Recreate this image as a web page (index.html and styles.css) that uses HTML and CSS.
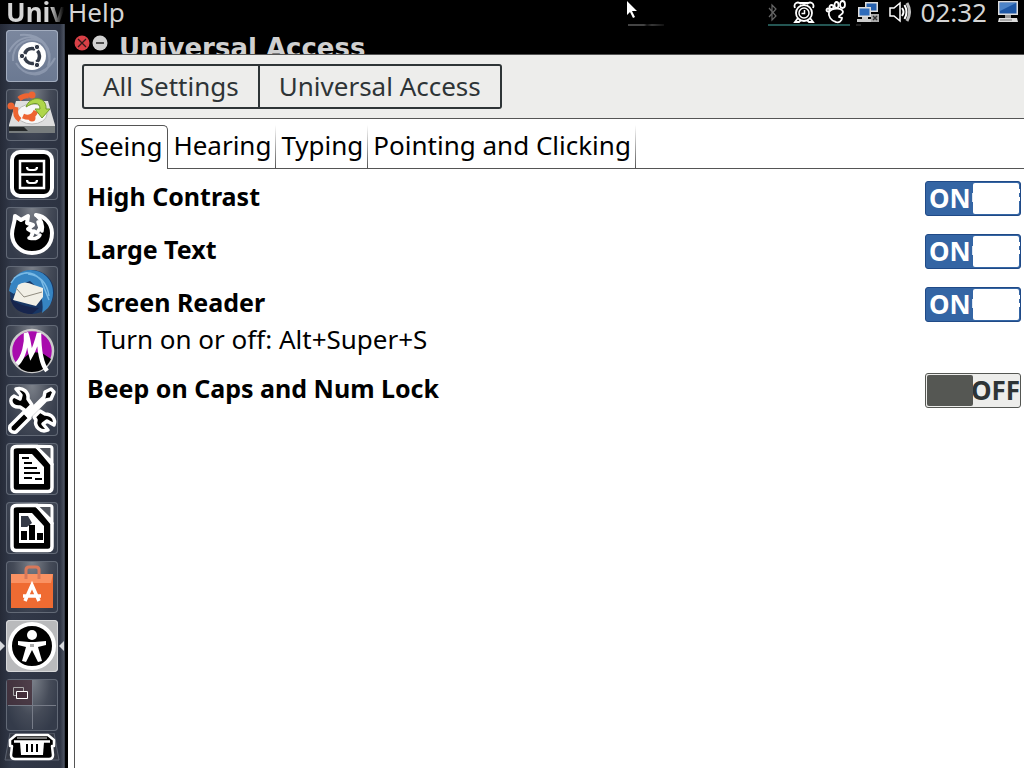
FILE: index.html
```html
<!DOCTYPE html>
<html lang="en">
<head>
<meta charset="utf-8">
<title>Universal Access</title>
<link rel="stylesheet" href="styles.css">
</head>
<body>
<header class="panel">
  <span class="app-name">Univ</span>
  <button class="menu-item">Help</button>
  <div class="remnants"><i class="bit bit-a"></i><i class="bit bit-b"></i><i class="bit bit-c"></i></div>
  <div class="indicators">
    <svg class="bluetooth" width="12" height="24" viewBox="0 0 12 24"><path d="M2 8l7 8-4 4V5l4 4-7 8" fill="none" stroke="#666" stroke-width="1.2"/></svg>
    <svg width="22" height="24" viewBox="0 0 22 24" fill="none" stroke="#fff" stroke-width="1.800"><path d="M2 8C0 3 5 1 8 4M20 8C22 3 17 1 14 4M5 18l-3 4h4l2-2M17 18l3 4h-4l-2-2M7 3h8"/><circle cx="11" cy="13" r="8"/><circle cx="11" cy="13" r="5" stroke-width="1.500"/><path d="M11.500 10v3.500H8.500" stroke-width="1.500"/></svg>
    <svg width="22" height="24" viewBox="0 0 22 24" fill="none" stroke="#fff" stroke-width="1.800"><path d="M4 12C7 8 17 7 18 12c0 3-5 3-4 5l3 1c0 3-3 5-6 4-5-1-8-6-7-10z"/><ellipse cx="17.500" cy="4.500" rx="2.500" ry="3.500"/><ellipse cx="11.500" cy="5" rx="2" ry="3"/><circle cx="6.500" cy="7" r="2"/><circle cx="3" cy="10" r="1.500"/></svg>
    <svg width="22" height="24" viewBox="0 0 22 24"><path d="M8 2h13v10H8z" fill="#ddd"/><path d="M9.500 3.500h10v7h-10z" fill="#2761ad"/><path d="M1 7h13v10H1z" fill="#ddd"/><path d="M2.500 8.500h10v7h-10z" fill="#2f6cbb"/><path d="M5 17h6v2H5zM0 19h15l1 3H0z" fill="#ccc"/><path d="M14 14h8v8h-8z" fill="#aaa"/><path d="M16 16l4 4m0-4l-4 4" stroke="#333" stroke-width="1.500"/></svg>
    <svg width="22" height="24" viewBox="0 0 22 24" fill="none" stroke="#fff" stroke-width="1.500"><path d="M1 8h4l6-5v18l-6-5H1z"/><path d="M13 8q3 4 0 8M15.500 5q4 7 0 14" stroke-width="2"/><path d="M18 3q5 9 0 18" stroke="#bbb" stroke-width="3"/></svg>
    <time class="clock">02:32</time>
    <svg class="session" width="22" height="24" viewBox="0 0 22 24"><path d="M1 1h20v14H1z" fill="#ddd"/><path d="M2.500 2.500h17v11h-17z" fill="#1e57a5"/><path d="M3 3h16L3 11z" fill="#4c83c7"/><path d="M8 15h6v3H8z" fill="#999"/><path d="M2 18h18l1 4H1z" fill="#ddd"/><path d="M3 20h12" stroke="#777"/></svg>
  </div>
</header>

<div class="desktop">
<nav class="launcher" aria-label="Launcher">
  <button class="tile dash" aria-label="Dash home"><svg viewBox="0 0 52 52"><g fill="none" stroke="#c0c9da" stroke-opacity=".35" stroke-width="2"><path d="M3 22C12 3 36 2 42 22s-9 26-23 20M14 5c22-2 34 14 28 31M7 31C6 12 23 6 36 12M49 28C39 47 19 48 10 33"/></g><circle cx="26" cy="26" r="14" fill="#fff"/><circle cx="26" cy="26" r="7.500" fill="none" stroke="#343b49" stroke-width="3.500" stroke-dasharray="13 2.700" stroke-dashoffset="6"/><g fill="#343b49" stroke="#fff"><circle cx="16" cy="26" r="2.700"/><circle cx="31" cy="17" r="2.700"/><circle cx="31" cy="35" r="2.700"/></g></svg></button>
  <button class="tile" aria-label="Install"><svg viewBox="0 0 52 52"><path d="M10 12h32l7 24v8H3v-8z" fill="#dedede"/><path d="M3 37h46v7H3z" fill="#777c7d"/><path d="M3 38h15l4 4H3z" fill="#252829"/><ellipse cx="26" cy="25" rx="15" ry="10" fill="#f7f7f7" stroke="#bbb"/><g fill="none" stroke="#ed6432" stroke-width="5"><path d="M13 10q5-4 10-3M10 18q-2 9 4 13M17 27q9 4 13-5"/></g><g fill="#ed6432"><circle cx="26" cy="6" r="3.500"/><circle cx="5" cy="17" r="3.500"/><circle cx="26" cy="29" r="3.500"/></g><path d="M20 18C24 6 41 7 40 20h4l-8 9-7-9h5c0-7-6-7-14-2z" fill="#afd64b" stroke="#709929"/></svg></button>
  <button class="tile" aria-label="Files"><svg viewBox="0 0 52 52"><rect x="6" y="4" width="40" height="44" rx="8" fill="#000" stroke="#fff" stroke-width="4"/><path d="M14 13h24v27H14zM14 26.500h24" fill="none" stroke="#fff" stroke-width="2.500"/><path d="M21 19q0 3 3 3h4q3 0 3-3M21 32q0 3 3 3h4q3 0 3-3" fill="none" stroke="#fff" stroke-width="2.200"/></svg></button>
  <button class="tile" aria-label="Firefox"><svg viewBox="0 0 52 52" stroke-linejoin="round" stroke-linecap="round"><path d="M9 9l6 4 7-4-1 6 5 3-4 4 5 2-1 5h7l2-5 2-9-4-6h5c6 4 8 10 8 17 0 13-9 20-20 20S6 38 6 27c0-7 3-11 3-18z" fill="#000"/><path d="M30 8C39 9 46 17 46 26c0 13-9 20-20 20S6 38 6 27c0-7 3-11 3-18l6 4 7-4-1 7 6 2-5 4 5 3-2 5" fill="none" stroke="#fff" stroke-width="4"/><path d="M23 31q8 2 11-3M28 24l3 2 3-5-2-6 4 5M30 8q8 7 6 16" fill="none" stroke="#fff" stroke-width="3.500"/></svg></button>
  <button class="tile" aria-label="Thunderbird"><svg viewBox="0 0 52 52"><circle cx="26" cy="26" r="22" fill="#183765"/><path d="M3 25C6 3 28-1 40 10c9 8 9 23 2 32l-6 5c2-9-1-17-3-24l-9-8-8 3-8 10z" fill="#3684c2"/><path d="M12 19q6-5 16 0l9 3v9l-7 9L7 34z" fill="#f1efe6"/><path d="M10 22l8 9 18-5" fill="none" stroke="#908c80"/><path d="M5 17C12 4 26 4 35 14l8 20M22 8q18 2 21 22M8 12q13-9 22-2" fill="none" stroke="#79b9e5" stroke-width="1.500"/><path d="M4 32q10 9 29 10l-7 6C14 48 7 43 4 32z" fill="#17254d"/></svg></button>
  <button class="tile" aria-label="MATE"><svg viewBox="0 0 52 52"><circle cx="26" cy="26" r="21" fill="#a80bad" stroke="#ccc" stroke-width="2.500"/><path d="M12 41q6-10 14-14l10 1 9 6q-6 13-19 13-9 0-14-6z" fill="#000"/><path d="M11 39C18 32 21 18 20 8c3 7 3 15 5 22 4-7 6-14 8-22 0 17 2 30 8 38" fill="none" stroke="#fff" stroke-width="4.500"/></svg></button>
  <button class="tile" aria-label="System Settings"><svg viewBox="0 0 52 52" stroke-linejoin="round"><g fill="#000" stroke="#fff" stroke-width="3.500"><path d="M10 5l5 6-1 4-6-3C2 15 5 24 14 23l6 4 6-6-4-6C23 8 17 3 10 5z"/><path d="M28 33l6-6 5 3c7 0 11 5 9 11l-7-4-4 3 5 6c-7 3-14-3-12-10z"/><path d="M4 42l14-14 6 6-14 14c-5 1-7-2-6-6z"/><path d="M21 30l17-17 1-5 6-3 3 3-3 7-5 1-17 17z"/></g></svg></button>
  <button class="tile" aria-label="Writer"><svg viewBox="0 0 52 52"><path d="M11 3.500h20l15 18v23q0 4-4 4H10q-4 0-4-4v-37q0-4 5-4z" fill="#000" stroke="#fff" stroke-width="3.500"/><path d="M30 3.500h14q2 0 2 2V19z" fill="#50545c" stroke="#fff" stroke-width="3"/><path d="M13 11h13l12 13v17H13z" fill="#fff"/><path d="M16 15h7M18 20h8M18 25h13M18 30h16M18 35h8M29 36h7" stroke="#000" stroke-width="2"/></svg></button>
  <button class="tile" aria-label="Calc"><svg viewBox="0 0 52 52"><path d="M11 3.500h20l15 18v23q0 4-4 4H10q-4 0-4-4v-37q0-4 5-4z" fill="#000" stroke="#fff" stroke-width="3.500"/><path d="M30 3.500h14q2 0 2 2V19z" fill="#50545c" stroke="#fff" stroke-width="3"/><path d="M13 11h13l12 13v17H13z" fill="#fff"/><path d="M15 14h7l4 7-5 4h-6z" fill="#353a47"/><path d="M15 29h6v9h-6zM23 23h6v15h-6zM31 31h6v7h-6z"/></svg></button>
  <button class="tile" aria-label="Software"><svg viewBox="0 0 52 52"><path d="M5 13h42v34H5z" fill="#ef6b32"/><path d="M5 13h42l-2 9H5z" fill="#fa9263"/><path d="M20 18V9q0-3 3-3h7q3 0 3 3v9" fill="none" stroke="#d8785a" stroke-width="3"/><path d="M19 40l7-16 7 16M17 35h18" fill="none" stroke="#fff" stroke-width="3.500"/></svg></button>
  <button class="tile active" aria-label="Universal Access"><svg viewBox="0 0 52 52"><circle cx="26" cy="26" r="22" fill="#000" stroke="#fff" stroke-width="4"/><circle cx="26" cy="15" r="5" fill="#fff"/><path d="M12 21l11 1h6l11-1v4l-8 2 4 14-4 1-6-12-6 12-4-1 4-14-8-2z" fill="#fff"/><path d="M24 24h4v3h-4z" fill="#aaa"/></svg></button>
  <button class="tile" aria-label="Workspaces"><svg viewBox="0 0 52 52"><path d="M1 1h25v25H1z" fill="#452f3b" fill-opacity=".8"/><path d="M26.500 2v48M2 26.500h48" stroke="#777c88"/><path d="M7.500 8.500h10v8h-10z" fill="none" stroke="#aaa"/><path d="M10.500 12.500h11v7h-11z" fill="#452f3b" stroke="#fff"/></svg></button>
  <button class="trash" aria-label="Trash"><svg viewBox="0 0 56 28" stroke-linejoin="round"><path d="M6 0h44l5 27H1z" fill="#353944" stroke="#5d6370"/><path d="M12 2h32l6 5v6h-2l1 9q0 4-4 4H11q-4 0-4-4l1-9H6V7z" fill="#000" stroke="#fff" stroke-width="2.500"/><path d="M13 5h30" stroke="#777" stroke-width="2"/><path d="M10 8.500h36" stroke="#fff" stroke-width="2.500"/><path d="M16 9h24l-1 13H17z" fill="#fff"/><path d="M23 11v8M28 11v8M33 11v8" stroke="#000" stroke-width="2"/></svg></button>
</nav>

<main class="window">
  <div class="titlebar">
    <button class="close" aria-label="Close"><svg viewBox="0 0 16 16"><circle cx="8" cy="8" r="7.500" fill="#d94046"/><path d="M4 4l8 8m0-8l-8 8" stroke="#31191a" stroke-width="1.300"/></svg></button>
    <button class="minimize" aria-label="Minimize"><svg viewBox="0 0 16 16"><circle cx="8" cy="8" r="7.500" fill="#d0d0d0"/><path d="M4 8h8" stroke="#222" stroke-width="1.500"/></svg></button>
    <h1>Universal Access</h1>
  </div>
  <div class="toolbar"><button>All Settings</button><button>Universal Access</button></div>
  <section class="notebook">
    <div class="tabs" role="tablist">
      <button role="tab" class="tab selected" aria-selected="true">Seeing</button>
      <button role="tab" class="tab" aria-selected="false">Hearing</button>
      <button role="tab" class="tab" aria-selected="false">Typing</button>
      <button role="tab" class="tab" aria-selected="false">Pointing and Clicking</button>
      <span class="tab-rest"></span>
    </div>
    <div class="page" role="tabpanel">
      <div class="setting"><label for="contrast">High Contrast</label><span class="switch on"><span class="on-text">ON</span><span class="knob"></span><input id="contrast" type="checkbox" role="switch" checked></span></div>
      <div class="setting"><label for="large">Large Text</label><span class="switch on"><span class="on-text">ON</span><span class="knob"></span><input id="large" type="checkbox" role="switch" checked></span></div>
      <div class="setting"><label for="reader">Screen Reader</label><span class="switch on"><span class="on-text">ON</span><span class="knob"></span><input id="reader" type="checkbox" role="switch" checked></span></div>
      <p class="hint">Turn on or off: Alt+Super+S</p>
      <div class="setting"><label for="beep">Beep on Caps and Num Lock</label><span class="switch"><span class="off-text">OFF</span><span class="knob"></span><input id="beep" type="checkbox" role="switch"></span></div>
    </div>
  </section>
</main>
</div>
<svg class="cursor" width="10" height="17" viewBox="0 0 10 17"><path d="M0 0v14l3-3 3 6 2-1-3-6h5z" fill="#fff"/></svg>
</body>
</html>
```
FILE: styles.css
```css
* { box-sizing: border-box; }
body {
  margin: 0;
  height: 100vh;
  display: flex;
  flex-direction: column;
  overflow: hidden;
  background: #000;
  color: #000;
  font: 26px/34px "Noto Sans", "Open Sans", sans-serif;
}
button { margin: 0; padding: 0; border: 0; background: none; color: inherit; font: inherit; }
svg { display: block; flex: none; }

.panel { position: relative; display: flex; height: 24px; flex: none; align-items: center; color: #d5d5d5; line-height: 22px; }
.app-name {
  width: 68px;
  padding-left: 6px;
  font-weight: 700;
  color: transparent;
  background: linear-gradient(90deg, #d5d5d5 50px, #000 64px);
  background-clip: text;
}
.menu-item { line-height: 22px; }
.indicators { display: flex; margin-left: auto; align-items: center; gap: 10px; padding-right: 5px; }
.bluetooth { margin-right: 4px; }
.remnants { position: absolute; top: 24px; left: 0; right: 0; display: flex; height: 2px; }
.bit { height: 2px; }
.bit-a { width: 36px; margin-left: 628px; background: linear-gradient(90deg, #444 16px, #111 19px, #383838 24px, #111); }
.bit-b { width: 82px; margin-left: 104px; background: #245653; }
.bit-c { width: 5px; margin-left: 6px; background: #222; }

.desktop { display: flex; flex: 1; min-height: 0; }
.launcher {
  width: 65px;
  flex: none;
  display: flex;
  flex-direction: column;
  align-items: center;
  gap: 7px;
  padding: 6px 1px 0 0;
  background: linear-gradient(90deg, #252a37, #323949 12px, #2d3342 60px, #4b5260 64px, #252a35);
}
.tile {
  position: relative;
  width: 52px;
  height: 52px;
  flex: none;
  border-radius: 4px;
  background: radial-gradient(ellipse at top, #7d828b, #454b58 50%, #343b4a 80%);
  box-shadow: inset 0 0 0 1px #626976;
}
.tile svg { width: 52px; height: 52px; }
.dash { background: linear-gradient(#7b879e, #6b7992); box-shadow: inset 0 0 0 1px #a3adbf; }
.active { background: #b9babc; box-shadow: inset 0 0 0 1px #d7d8da; }
.active::before, .active::after { content: ""; position: absolute; top: 21px; border: 5px solid transparent; }
.active::before { left: -6px; border-left-color: #d7d9dd; border-right: 0; }
.active::after { right: -6px; border-right-color: #d7d9dd; border-left: 0; }
.trash { width: 56px; height: 28px; flex: none; margin-top: -5px; }
.trash svg { width: 56px; height: 28px; }

.window { flex: 1; min-width: 0; margin-left: 3px; display: flex; flex-direction: column; background: #fff; }
.titlebar { display: flex; height: 31px; flex: none; gap: 2px; padding: 11px 0 0 6px; overflow: hidden; background: #000; border-bottom: 1px solid #555; }
.titlebar button, .titlebar svg { width: 16px; height: 16px; }
.titlebar h1 { margin: 0 0 0 9px; color: #d0d0d0; font: 700 26px/26px "DejaVu Sans", sans-serif; white-space: nowrap; }
.toolbar { display: flex; flex: none; padding: 9px 14px; background: #ededeb; border-bottom: 1px solid #555; color: #2e3436; }
.toolbar button { height: 45px; padding: 0 19px 2px; border: 2px solid #2e3436; }
.toolbar button:first-child { border-radius: 3px 0 0 3px; }
.toolbar button + button { border-left: 0; border-radius: 0 3px 3px 0; }

.notebook { flex: 1; display: flex; flex-direction: column; padding: 6px 0 0 6px; }
.tabs { display: flex; height: 44px; flex: none; }
.tab { padding: 0 5px 3px; white-space: nowrap; border-bottom: 1px solid #555; }
.tab.selected { padding-bottom: 4px; border: 1px solid #555; border-bottom: 0; border-radius: 5px 5px 0 0; }
.tab:not(.selected) { background: linear-gradient(#fff, #555) right / 1px 100% no-repeat; }
.tab-rest { flex: 1; border-bottom: 1px solid #555; }
.page { flex: 1; display: flex; flex-direction: column; gap: 18px; padding: 12px 3px 0 12px; border-left: 1px solid #555; }
.setting { display: flex; height: 35px; flex: none; justify-content: space-between; }
.setting label { font-size: 25px; font-weight: 700; line-height: 31px; }
.hint { margin: -18px 0 -2px 10px; height: 35px; line-height: 34px; }

.switch {
  position: relative;
  width: 96px;
  height: 35px;
  flex: none;
  overflow: hidden;
  border: 1px solid #555753;
  border-radius: 3px;
  background: #ededeb;
  color: #2e3436;
  font-weight: 700;
  line-height: 32px;
}
.switch.on { border-color: #204a87; background: #3465a4; color: #fff; }
.on-text, .off-text, .knob, .switch input { position: absolute; top: 0; }
.on-text { left: 3px; }
.off-text { left: 45px; }
.knob { top: 1px; left: 1px; width: 46px; height: 31px; border-radius: 2px; background: #555753; }
.on .knob { left: 47px; background: #fff; }
.on::before { content: ""; position: absolute; left: 46px; top: 11px; width: 1px; height: 9px; background: #dce5f0; }
.on::after {
  content: "";
  position: absolute;
  right: -1px;
  top: 7px;
  width: 2px;
  height: 12px;
  background: linear-gradient(#fff 4px, transparent 4px 8px, #fff 8px);
}
.switch input { left: 0; width: 100%; height: 100%; margin: 0; opacity: 0; }
.cursor { position: absolute; left: 627px; top: 1px; }
```
